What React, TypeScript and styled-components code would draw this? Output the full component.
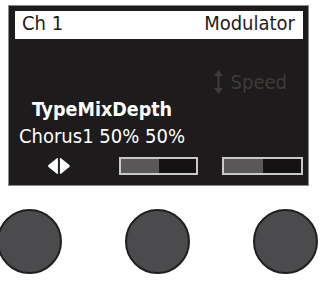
import styled, { createGlobalStyle } from "styled-components";

const GlobalStyle = createGlobalStyle`
  html, body {
    margin: 0;
    padding: 0;
    background: #ffffff;
  }
  body {
    font-family: "DejaVu Sans Condensed", "DejaVu Sans", "Liberation Sans", sans-serif;
    font-stretch: condensed;
  }
`;

const Device = styled.div`
  width: 320px;
  height: 282px;
  overflow: hidden;
  padding-top: 6px;
  box-sizing: border-box;
`;

const Screen = styled.div`
  margin-left: 9px;
  width: 299px;
  height: 179px;
  box-sizing: border-box;
  background: #1d1b1b;
  padding: 5px 5px 0 6px;
  box-shadow: 0 0 0 1px #8a8a8a;
`;

const Header = styled.div`
  height: 28px;
  background: #ffffff;
  display: flex;
  justify-content: space-between;
  align-items: flex-start;
  padding: 0 8px 0 7px;
  font-size: 20px;
  line-height: 25px;
  color: #1d1b1b;
`;

const ParamHint = styled.div`
  margin-top: 30px;
  height: 26px;
  display: flex;
  justify-content: flex-end;
  align-items: center;
  gap: 8px;
  padding-right: 16px;
  color: #3d3a3a;
  font-size: 20px;
  line-height: 26px;
`;

const TextBlock = styled.div`
  margin-top: 2px;
  width: 174px;
  text-align: center;
  color: #ffffff;
`;

const Line = styled.div<{ $bold?: boolean }>`
  font-size: ${(p) => (p.$bold ? "19.5px" : "20px")};
  font-weight: ${(p) => (p.$bold ? 700 : 400)};
  line-height: 26px;
  white-space: nowrap;
`;

const Controls = styled.div`
  margin-top: 8px;
  height: 18px;
  display: flex;
  align-items: center;
  padding-left: 32px;
`;

const Bar = styled.div<{ $gap: number; $width: number }>`
  margin-left: ${(p) => p.$gap}px;
  width: ${(p) => p.$width}px;
  height: 18px;
  box-sizing: border-box;
  border: 2px solid #c9c9c9;
  background: #141212;
  display: flex;
`;

const BarFill = styled.div`
  height: 100%;
  background: #595757;
`;

const Knobs = styled.div`
  margin-top: 24px;
  margin-left: -3px;
  display: flex;
  gap: 63px;
`;

const Knob = styled.div`
  width: 65px;
  height: 65px;
  border-radius: 50%;
  box-sizing: border-box;
  background: #4b4b4d;
  border: 2px solid #1f1f1f;
`;

function UpDownIcon() {
  return (
    <svg width="9" height="24" viewBox="0 0 9 24">
      <polygon points="4.5,0 9,6 0,6" fill="#3d3a3a" />
      <rect x="3.5" y="5" width="2" height="14" fill="#3d3a3a" />
      <polygon points="4.5,24 9,18 0,18" fill="#3d3a3a" />
    </svg>
  );
}

function LeftRightIcon() {
  return (
    <svg width="24" height="18" viewBox="0 0 24 18">
      <path d="M11 1 L11 17 Q10 17 9 16 L1.5 10 Q0.5 9 1.5 8 L9 2 Q10 1 11 1 Z" fill="#ffffff" />
      <path d="M13 1 L13 17 Q14 17 15 16 L22.5 10 Q23.5 9 22.5 8 L15 2 Q14 1 13 1 Z" fill="#ffffff" />
    </svg>
  );
}

export default function App() {
  const bars = [
    { gap: 48, width: 80, value: 0.5 },
    { gap: 24, width: 81, value: 0.5 },
  ];
  return (
    <>
      <GlobalStyle />
      <Device>
        <Screen>
          <Header>
            <span>Ch 1</span>
            <span>Modulator</span>
          </Header>
          <ParamHint>
            <UpDownIcon />
            <span>Speed</span>
          </ParamHint>
          <TextBlock>
            <Line $bold>TypeMixDepth</Line>
            <Line>Chorus1 50% 50%</Line>
          </TextBlock>
          <Controls>
            <LeftRightIcon />
            {bars.map((b, i) => (
              <Bar key={i} $gap={b.gap} $width={b.width}>
                <BarFill style={{ width: `${b.value * 100}%` }} />
              </Bar>
            ))}
          </Controls>
        </Screen>
        <Knobs>
          <Knob />
          <Knob />
          <Knob />
        </Knobs>
      </Device>
    </>
  );
}
